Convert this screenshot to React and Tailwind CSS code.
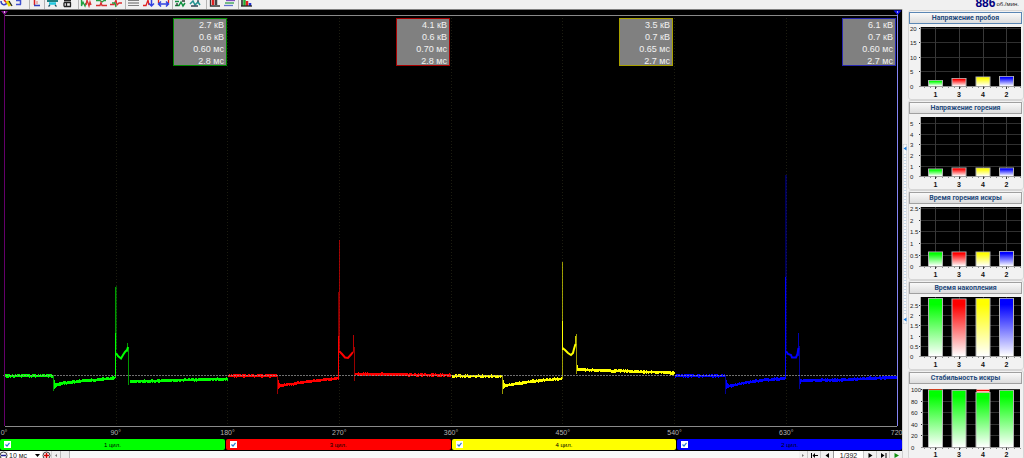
import React from "react";

const COLORS = { g: "#00ff00", r: "#ff0000", y: "#ffff00", b: "#0000ff" };

/* Repeatable pseudo-random noise in the range -1..1 */
function noise(n) {
  const v = Math.sin(n * 12.9898) * 43758.5453;
  return (v - Math.floor(v)) * 2 - 1;
}

/* Turns a list of knots into a noisy signal path, one sample per pixel */
function signal(points, amp = 1) {
  let d = "";
  for (let i = 0; i < points.length - 1; i++) {
    const [x0, y0] = points[i];
    const [x1, y1] = points[i + 1];
    for (let x = x0; x < x1; x++) {
      const y = y0 + ((y1 - y0) * (x - x0)) / (x1 - x0);
      const top = y - 1.4 + noise(x) * 0.5 * amp;
      const bottom = y + 1.5 + noise(x + 500) * 0.5 * amp;
      d += `M${x + 0.5} ${top.toFixed(2)}V${bottom.toFixed(2)}`;
    }
  }
  return d;
}

const TRACES = [
  {
    color: COLORS.g,
    flat: [[5, 375.7], [53, 375.7]],
    dwell: [[55, 385], [62, 383.5], [85, 380.5], [115, 378]],
    tail: [[130, 381.5], [150, 381], [190, 379.8], [228, 379]],
    ring: 53,
    low: 391,
    burn: "116,353 118,356 121,358.5 123,355 125,352 127,350 128,347",
    bars: [[115, 333, 378, 1], [115, 287, 333, 0.6], [116, 286, 350, 0.3], [127, 343, 352, 0.6], [128, 347, 385, 0.6]],
  },
  {
    color: COLORS.r,
    flat: [[228, 375.7], [277, 375.7]],
    dwell: [[279, 386], [284, 385], [310, 381.2], [339, 378]],
    tail: [[355, 374], [400, 374.5], [451, 375.2]],
    ring: 277,
    low: 394,
    burn: "339,351 342,354 345,357.5 348,358 351,354.5 353,352",
    bars: [[338, 336, 379, 1], [338, 292, 336, 0.5], [339, 240, 350, 0.6], [353, 335, 352, 0.7], [354, 347, 381, 0.6]],
  },
  {
    color: COLORS.y,
    flat: [[452, 375.9], [502, 376.2]],
    dwell: [[504, 386], [508, 385], [530, 381.5], [562, 378.4]],
    tail: [[578, 369.4], [620, 371], [675, 372.8]],
    ring: 502,
    low: 394,
    burn: "562.5,348 565,350 568,353 571,355 573,353 574,349 575.5,344",
    bars: [[562, 321, 350, 1], [562, 262, 379, 0.6], [575, 336, 346, 0.8], [576, 334, 374, 0.6], [577, 365, 371, 1]],
  },
  {
    color: COLORS.b,
    flat: [[675, 375.8], [725, 375.8]],
    dwell: [[727, 386.5], [732, 385.5], [745, 382.5], [765, 380], [785, 378.4]],
    tail: [[801, 380.5], [840, 380], [870, 378.3], [897, 377.3]],
    ring: 725,
    low: 394,
    burn: "786,351 788,354 791,355 792,357.5 796,357.5 797.5,354 798.5,348",
    bars: [[785, 277, 379, 1], [785, 175, 277, 0.35], [786, 175, 350, 0.3], [798, 333, 356, 0.7], [799, 346, 389, 0.6], [800, 379, 384, 1]],
  },
];

function Trace({ t }) {
  return (
    <g stroke={t.color} fill="none" shapeRendering="crispEdges">
      <path d={signal(t.flat) + signal(t.dwell) + signal(t.tail)} />
      <path d={`M${t.ring + 0.5} 375V${t.low}`} opacity="0.6" />
      <path d={`M${t.ring + 1.5} 380V389M${t.ring + 2.5} 383V388M${t.ring + 3.5} 384V387`} />
      <polyline points={t.burn} strokeWidth="2" shapeRendering="auto" />
      {t.bars.map(([x, a, b, o], i) => (
        <path key={i} d={`M${x + 0.5} ${a}V${b}`} opacity={o} />
      ))}
    </g>
  );
}

const READOUTS = [
  { border: "border-[#008c00]", rows: ["2.7 кВ", "0.6 кВ", "0.60 мс", "2.8 мс"] },
  { border: "border-[#a80000]", rows: ["4.1 кВ", "0.6 кВ", "0.70 мс", "2.8 мс"] },
  { border: "border-[#a8a000]", rows: ["3.5 кВ", "0.7 кВ", "0.65 мс", "2.7 мс"] },
  { border: "border-[#2828b0]", rows: ["6.1 кВ", "0.7 кВ", "0.60 мс", "2.7 мс"] },
];

function Scope() {
  return (
    <section className="relative flex min-h-0 flex-1 flex-col justify-between overflow-hidden bg-black">
      <svg className="absolute inset-0 h-full w-full" viewBox="0 10 902 428" preserveAspectRatio="none" aria-hidden="true">
        <g shapeRendering="crispEdges" fill="none">
          <path d="M5 15.5H897" stroke="#8a8a8a" />
          <path d="M5 426.5H897" stroke="#8a8a8a" />
          <path d="M116.5 18V426M227.5 18V426M339.5 18V426M451.5 18V426M562.5 18V426M674.5 18V426M786.5 18V426" stroke="#1c1c10" strokeDasharray="1 2" />
        </g>
        {TRACES.map((t) => (
          <Trace key={t.color} t={t} />
        ))}
        <g shapeRendering="crispEdges" fill="none">
          <path d="M3 375.5H897" stroke="#a0a0a0" strokeOpacity="0.7" strokeDasharray="2 1" />
          <path d="M4.5 14V426" stroke="#64006a" />
          <path d="M897.5 14V426" stroke="#8484f4" />
        </g>
        <path d="M1 11H8L4.5 15Z" fill="#80108c" />
        <path d="M4 11h1v2h-1z" fill="#d8c0e0" />
        <path d="M893.5 10.500H901.500L897.500 15Z" fill="#1010f0" />
        <path d="M897 11h1v2h-1z" fill="#a0a0ff" />
      </svg>
      <div className="relative grid grid-cols-4 pt-2 pr-[6px] pl-1">
        {READOUTS.map((r, i) => (
          <div key={i} className="flex justify-end">
            <div className={`h-[48px] w-[54px] border bg-[#808080] pr-[2px] text-right text-[9px] leading-[12px] text-white/90 ${r.border}`}>
              {r.rows.map((v, k) => (
                <div key={k}>{v}</div>
              ))}
            </div>
          </div>
        ))}
      </div>
      <div className="relative flex justify-between pb-px pl-[4px] pr-[4px] text-[7px] leading-[9px] text-[#b4b4b4]">
        {["0°", "90°", "180°", "270°", "360°", "450°", "540°", "630°", "720°"].map((a) => (
          <span key={a} className="flex w-0 justify-center whitespace-nowrap">{a}</span>
        ))}
      </div>
    </section>
  );
}

const CYLINDERS = [
  { n: 1, bg: "bg-[#00ff00]" },
  { n: 3, bg: "bg-[#ff0000]" },
  { n: 4, bg: "bg-[#ffff00]" },
  { n: 2, bg: "bg-[#0000ff]" },
];

function CylinderBar() {
  return (
    <div className="grid h-[13px] shrink-0 grid-cols-4 gap-px bg-black pt-px pb-px">
      {CYLINDERS.map((c) => (
        <label key={c.n} className={`relative flex items-center justify-center rounded-[2px] text-[6px] leading-none text-black ${c.bg}`}>
          <input type="checkbox" defaultChecked className="absolute left-1 size-[7px] appearance-none bg-white" />
          <svg className="pointer-events-none absolute left-1 size-[7px]" viewBox="0 0 7 7" aria-hidden="true">
            <path d="M1.500 3.500L3 5L5.500 1.800" fill="none" stroke="#2a7ad0" strokeWidth="1.200" />
          </svg>
          {c.n} цил.
        </label>
      ))}
    </div>
  );
}

function Magnifier({ plus }) {
  return (
    <svg className="size-[9px]" viewBox="0 0 9 9" aria-hidden="true">
      <circle cx="4.500" cy="4.500" r="3.500" fill="#fff" stroke="#444" />
      <path d={plus ? "M2 4.500H7M4.500 2V7" : "M2 4.500H7"} stroke={plus ? "#d00000" : "#202090"} strokeWidth="1.500" />
    </svg>
  );
}

function NavButton({ label, d, color = "#000" }) {
  return (
    <button type="button" aria-label={label} className="flex h-full w-[13px] items-center justify-center border-l border-[#c8c8c8] bg-[#f0f0f0]">
      <svg className="h-[5px] w-[7px]" viewBox="0 0 7 5" aria-hidden="true">
        <path d={d} fill={color} />
      </svg>
    </button>
  );
}

function BottomBar() {
  return (
    <div className="h-[7px] shrink-0 overflow-hidden bg-[#f0f0f0]">
      <div className="flex h-[9px] items-center">
        <button type="button" aria-label="Уменьшить" className="-ml-px"><Magnifier /></button>
        <select aria-label="Развёртка" className="h-[9px] w-[25px] appearance-none bg-white pl-px text-[7px] leading-[9px] text-[#222]">
          <option>10 мс</option>
        </select>
        <span className="flex h-[9px] w-[9px] items-center justify-center bg-white">
          <svg className="h-[3px] w-[5px]" viewBox="0 0 5 3" aria-hidden="true"><path d="M0 0H5L2.500 3Z" fill="#000" /></svg>
        </span>
        <button type="button" aria-label="Увеличить"><Magnifier plus /></button>
        <button type="button" aria-label="Влево" className="flex h-full w-[9px] items-center justify-center border-l border-[#d0d0d0]">
          <svg className="h-[3px] w-[2px]" viewBox="0 0 2 3" aria-hidden="true"><path d="M2 0V3L0 1.500Z" fill="#777" /></svg>
        </button>
        <span className="h-full w-[10px] border-x border-[#b8b8b8] bg-[#ececec]" />
        <span className="h-full flex-1 bg-[#f8f8f8]" />
        <button type="button" aria-label="Вправо" className="flex h-full w-[8px] items-center justify-center">
          <svg className="h-[3px] w-[2px]" viewBox="0 0 2 3" aria-hidden="true"><path d="M0 0V3L2 1.500Z" fill="#777" /></svg>
        </button>
        <NavButton label="Первый" d="M0 0H1V5H0ZM4 0V5L1.500 2.500ZM4 2H7V3H4Z" />
        <NavButton label="Назад" d="M5 0V5L1.500 2.500Z" />
        <span className="flex h-full w-[30px] items-center justify-center border-l border-[#999] bg-white text-[7px] leading-[9px] text-[#222]">1/392</span>
        <NavButton label="Вперёд" d="M1.500 0V5L5.500 2.500Z" />
        <NavButton label="Последний" d="M1 0V5L4.500 2.500ZM5.500 0H6.500V5H5.500Z" />
        <NavButton label="Пуск" d="M1.500 0V5L6 2.500Z" color="#109010" />
      </div>
    </div>
  );
}

const BAR_KEYS = ["g", "r", "y", "b"];
const CHARTS = [
  { title: "Напряжение пробоя", top: 3, base: 62, ticks: [["20", 4], ["15", 18], ["10", 33], ["5", 47], ["0", 62]], bars: [6, 8, 9.5, 10] },
  { title: "Напряжение горения", top: 3, base: 62, ticks: [["5", 9], ["4", 20], ["3", 30], ["2", 41], ["1", 52], ["0", 62]], bars: [7.5, 8.5, 8.5, 8.5] },
  { title: "Время горения искры", top: 3, base: 62, ticks: [["2.5", 4], ["2", 16], ["1.5", 27], ["1", 39], ["0.5", 51], ["0", 62]], bars: [14.5, 14.5, 14.5, 15] },
  { title: "Время накопления", top: 3, base: 62, ticks: [["2.5", 11], ["2", 21], ["1.5", 31], ["1", 42], ["0.5", 52], ["0", 62]], bars: [58, 57.5, 58, 58] },
  { title: "Стабильность искры", top: 5, base: 63, stability: true, ticks: [["100", 5], ["80", 17], ["60", 28], ["40", 40], ["20", 51], ["0", 63]], bars: [57.5, 57, 55, 57] },
];
const CENTERS = [26.5, 50, 74, 97.5];

function BarChart({ c }) {
  const left = c.stability ? 14 : 12;
  return (
    <svg className="block h-[74px] w-full" viewBox="0 0 113 74" role="img" aria-label={c.title}>
      <rect x={left} y={c.top} width={c.stability ? 97 : 100} height={c.base - c.top} fill="#000" />
      <g shapeRendering="crispEdges">
        {c.ticks.map(([t, y]) => (
          <path key={t} d={`M${left - 2} ${y + 0.5}H${c.stability ? 111 : 112}`} stroke={t === "0" ? "#909090" : "#303030"} />
        ))}
        {CENTERS.map((x) => (
          <path key={x} d={`M${Math.floor(x) + 0.5} ${c.top}V${c.base + 3}`} stroke="#383838" />
        ))}
        <path d={`M${left - 0.5} ${c.top}V${c.base}`} stroke="#b0b0b0" />
        <path d={`M15 ${c.base + 1.5}H112`} stroke="#909090" strokeDasharray="1 5" />
      </g>
      {c.bars.map((h, i) => (
        <g key={i}>
          <rect x={CENTERS[i] - 7.5} y={c.base - h} width="15" height={h + 0.5} fill="#b4b4b4" />
          <rect x={CENTERS[i] - 6.5} y={c.base - h + 0.8} width="13" height={h - 0.8} fill={`url(#bar-${c.stability ? "g" : BAR_KEYS[i]})`} />
          {c.stability && i === 0 && <rect x={CENTERS[i] - 6.5} y={c.top} width="13" height="1" fill="#d04020" />}
          {c.stability && i === 2 && (
            <>
              <rect x={CENTERS[i] - 6.5} y={c.top} width="13" height="3.5" fill="#ffb8b0" />
              <rect x={CENTERS[i] - 6.5} y={c.top + 1} width="13" height="1" fill="#ff0000" />
            </>
          )}
        </g>
      ))}
      <g fontSize="6" fill="#222">
        {c.ticks.map(([t, y]) => (
          <text key={t} x={c.stability ? 2 : 1} y={y + 2.5}>{t}</text>
        ))}
      </g>
      <g fontSize="7" fontWeight="bold" fill="#111" textAnchor="middle">
        {["1", "3", "4", "2"].map((n, i) => (
          <text key={n} x={CENTERS[i]} y="73">{n}</text>
        ))}
      </g>
    </svg>
  );
}

function SidePanel() {
  return (
    <aside className="flex w-[116px] shrink-0 flex-col overflow-hidden">
      <svg className="absolute size-0" aria-hidden="true">
        <defs>
          {Object.entries(COLORS).map(([k, v]) => (
            <linearGradient key={k} id={`bar-${k}`} x1="0" y1="0" x2="0" y2="1">
              <stop offset="0.1" stopColor={v} />
              <stop offset="1" stopColor="#ffffff" />
            </linearGradient>
          ))}
        </defs>
      </svg>
      {CHARTS.map((c, i) => (
        <section key={c.title} className="shrink-0 rounded-[3px] border border-[#d6d6d6] bg-[#f2f2f2] pt-px pr-px pb-px">
          <button
            type="button"
            className={`flex h-[12px] w-full items-center justify-center border bg-linear-to-b from-[#fafafa] to-[#dcdcdc] font-[Roboto,sans-serif] text-[7px] leading-none font-bold whitespace-nowrap text-[#1f4a7c] ${i === 0 ? "border-[#5a86b4]" : "border-[#a0a0a0]"}`}
          >
            {c.title}
          </button>
          <BarChart c={c} />
        </section>
      ))}
    </aside>
  );
}

const s = (d, c, w = 1.3) => ({ d, c, w });
const TOOLS = [
  { label: "Поиск", w: "w-[13px]", p: [s("M1 1C1 5 5 6 7 3", "#3040c0", 1.5), s("M4 0L7 3", "#e02020", 1.5), s("M7 1L10 6", "#e8d800", 3), s("M9 1L12 6", "#222")] },
  { label: "Сигнал", w: "w-[13px]", p: [s("M3 .5H8M7.500 0V4.500M3 4.500H8", "#4050d0", 1.5)] },
  { sep: true },
  { label: "Синхронизация", w: "w-[13px]", p: [s("M4.500 0V5", "#e02020", 1.5), s("M4 5.500H10", "#3040c0", 1.5), s("M7 1V4", "#e09090")] },
  { sep: true, thin: true },
  { label: "Датчик", w: "w-[15px]", p: [s("M1 1H12", "#208080", 2), s("M3 3.500H10", "#20c8e0", 2.5), s("M4 5L2.500 6.500M9 5L10.500 6.500", "#205060")] },
  { label: "Параметры", w: "w-[15px]", p: [s("M3 .5H10M3 2.500V6.500M5.500 2.500V6.500M3 2.500H10M9.500 2.500V6.500M3 6.500H10", "#222")] },
  { sep: true },
  { label: "Осциллограммы", w: "w-[15px]", p: [s("M1.500 0V6L3 2L5 6L6 3", "#20a040"), s("M6 5L7 0L9 6L10 2L11 5", "#d83030")] },
  { label: "Парад", w: "w-[15px]", p: [s("M1 .5H5L7 2L9 .5H11", "#20a040"), s("M1 5.500H5L6 2.500L7 5.500H12", "#d83030")] },
  { label: "Растр", w: "w-[15px]", p: [s("M0 4.500H4L6 0L7 5L9 3H12", "#d83030"), s("M2 3L5 3L6 7", "#20a040")] },
  { sep: true, thin: true },
  { label: "Линии", w: "w-[15px]", p: [s("M1 .5H12M1 5.500H12", "#808080", 1), s("M1 3H12", "#606060", 1)] },
  { label: "Маркер", w: "w-[15px]", p: [s("M1 5.500H4L6 0L7 5", "#e02020"), s("M9.500 0V6M7 3.500L9.500 6L12 3.500", "#3040e0", 1.5)] },
  { label: "Интервал", w: "w-[15px]", p: [s("M1.500 0V3M11.500 0V3", "#e02020"), s("M1 4H12M4 1.500L1.500 4L4 6.500M9 1.500L11.500 4L9 6.500", "#3040e0", 1.5)] },
  { sep: true, thin: true },
  { label: "Снимок", w: "w-[15px]", p: [s("M1 1.500H5M1 5.500H5L7 2L9 6L11 3", "#109040", 1.5), s("M8 1H11M3 3V6", "#333")] },
  { label: "История", w: "w-[15px]", p: [s("M1 4L4 1L6 5L9 2L11 5", "#209090", 1.5), s("M2 6H9M9 0V2", "#345")] },
  { sep: true },
  { label: "Отчёт", w: "w-[15px]", p: [s("M2.500 0V6H12", "#333"), s("M5 0V5", "#e02020", 2.5), s("M8 0V5", "#444", 2.5)] },
  { label: "Слои", w: "w-[15px]", p: [s("M3 .5H12", "#8050c0"), s("M2 3H11", "#30a050"), s("M1 5.500H10", "#6070d0")] },
  { sep: true, thin: true },
  { label: "Диаграммы", w: "w-[15px]", p: [s("M2 0V6", "#202020", 1.5), s("M4.500 0V6", "#20b030", 2.5), s("M7 1V6", "#e02020", 2.5), s("M10 3V6", "#2030d0", 2.5), s("M1 6H12", "#222")] },
];

function Toolbar() {
  return (
    <header className="flex h-[9px] shrink-0 items-stretch overflow-hidden bg-[#f0f0f0]">
      {TOOLS.map((t, i) =>
        t.sep ? (
          <span key={i} className={`shrink-0 border-r border-[#b4b4b4] ${t.thin ? "w-[2px]" : "w-[4px]"}`} />
        ) : (
          <button key={i} type="button" aria-label={t.label} className={`flex shrink-0 justify-center ${t.w}`}>
            <svg className="h-[8px] w-[13px]" viewBox="0 0 13 8" aria-hidden="true">
              {t.p.map((p, k) => (
                <path key={k} d={p.d} fill="none" stroke={p.c} strokeWidth={p.w} />
              ))}
            </svg>
          </button>
        )
      )}
      <div className="ml-auto flex items-end pr-[5px] whitespace-nowrap">
        <span className="text-[12px] leading-[11px] font-bold text-[#000080]">886</span>
        <span className="pl-px text-[6px] leading-[9px] text-[#222]">об./мин.</span>
      </div>
    </header>
  );
}

function Splitter() {
  return (
    <div className="flex w-[6px] shrink-0 flex-col items-start justify-center border-l border-[#d0d0d0] bg-[#f0f0f0]">
      <svg className="h-[180px] w-[4px]" viewBox="0 0 4 180" aria-hidden="true">
        <rect width="4" height="180" fill="#f8fafc" stroke="#c0c4c8" />
        <path d="M2 10V170" stroke="#98b8d8" strokeDasharray="1 2" />
        <path d="M3.500 2.500V6.500L.5 4.500ZM3.500 173.500V177.500L.5 175.500Z" fill="#2080e0" />
      </svg>
    </div>
  );
}

export default function App() {
  return (
    <div className="flex h-screen flex-col overflow-hidden bg-[#f0f0f0] font-['Liberation_Sans',Arial,sans-serif]">
      <Toolbar />
      <div className="flex min-h-0 flex-1">
        <main className="flex min-w-0 flex-1 flex-col border-t border-[#808080]">
          <Scope />
          <CylinderBar />
          <BottomBar />
        </main>
        <Splitter />
        <div className="flex shrink-0 pt-px">
          <SidePanel />
        </div>
      </div>
    </div>
  );
}
